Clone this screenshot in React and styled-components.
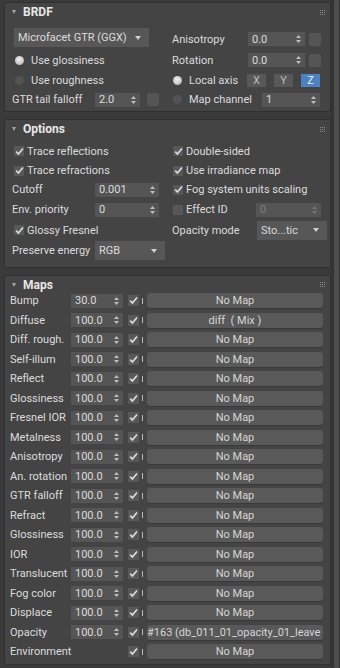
import React from "react";
import styled, { createGlobalStyle } from "styled-components";

const GlobalStyle = createGlobalStyle`
  html, body {
    margin: 0;
    padding: 0;
    background: #3a3a3a;
  }
  body {
    font-family: Roboto, "Liberation Sans", Arial, sans-serif;
    font-size: 11px;
    color: #dcdcdc;
  }
  #root {
    width: 340px;
    height: 668px;
    overflow: hidden;
  }
`;

const Window = styled.div`
  display: flex;
  width: 340px;
  height: 668px;
  overflow: hidden;
  background: #3a3a3a;
`;

const Main = styled.div`
  width: 331px;
  flex: none;
  display: flex;
  flex-direction: column;
  gap: 7px;
  padding: 2px 0 0 4px;
  box-sizing: border-box;
`;

const Scroll = styled.div`
  flex: 1;
  display: flex;
  justify-content: flex-end;
  padding-right: 1px;
  background: #343434;
`;

const Thumb = styled.div`
  width: 5px;
  background: #4e4e4e;
`;

const Panel = styled.section`
  background: #444444;
  border: 1px solid #303030;
  border-radius: 2px;
`;

const Header = styled.div`
  height: 18px;
  display: flex;
  align-items: center;
  padding: 0 5px 0 7px;
  font-size: 12px;
  font-weight: 700;
  color: #e8e8e8;
`;

const Caret = styled.span`
  width: 0;
  height: 0;
  border-left: 2.5px solid transparent;
  border-right: 2.5px solid transparent;
  border-top: 4px solid #a4a4a4;
  margin-right: 7px;
`;

const Grip = styled.svg`
  margin-left: auto;
`;

const Grid = styled.div`
  display: grid;
  grid-template-columns: 165px 160px;
  grid-template-rows: ${(p) => p.$rows};
  padding: ${(p) => p.$pad};
`;

const Cell = styled.div`
  display: flex;
  align-items: ${(p) => (p.$top ? "flex-start" : "center")};
  padding-left: ${(p) => (p.$right ? 2 : 7)}px;
  min-width: 0;
  white-space: nowrap;
`;

const Label = styled.span`
  width: ${(p) => (p.$w ? `${p.$w}px` : "auto")};
  flex: none;
  color: ${(p) => (p.$dim ? "#9a9a9a" : "#dcdcdc")};
`;

const SpinBox = styled.div`
  width: ${(p) => p.$w}px;
  height: 14px;
  flex: none;
  display: flex;
  align-items: center;
  justify-content: space-between;
  box-sizing: border-box;
  padding: 0 4px 0 4px;
  margin-left: ${(p) => p.$ml || 0}px;
  background: #555555;
  color: ${(p) => (p.$off ? "#7c7c7c" : "#dcdcdc")};
  visibility: ${(p) => (p.$hidden ? "hidden" : "visible")};
`;

const MapSlot = styled.div`
  width: 12px;
  height: 13px;
  flex: none;
  margin-left: ${(p) => p.$ml}px;
  border-radius: 2px;
  background: #555555;
`;

const Drop = styled.div`
  width: ${(p) => p.$w}px;
  height: 19px;
  flex: none;
  display: flex;
  align-items: center;
  justify-content: space-between;
  box-sizing: border-box;
  padding: 0 8px 0 4px;
  margin-left: ${(p) => p.$ml || 0}px;
  background: #575757;
  color: #dcdcdc;
`;

const DropCaret = styled.span`
  width: 0;
  height: 0;
  border-left: 3px solid transparent;
  border-right: 3px solid transparent;
  border-top: 4px solid #d0d0d0;
`;

const Radio = styled.span`
  width: 9px;
  height: 9px;
  flex: none;
  border-radius: 50%;
  margin: 0 7px 0 ${(p) => p.$ml}px;
  background: ${(p) =>
    p.$on ? "radial-gradient(circle at 45% 40%, #f0f0f0 0, #c8c8c8 60%, #8a8a8a 100%)" : "#535353"};
`;

const Box = styled.span`
  width: ${(p) => p.$s || 10}px;
  height: ${(p) => p.$s || 10}px;
  flex: none;
  display: flex;
  align-items: center;
  justify-content: center;
  margin: 0 ${(p) => (p.$mr === undefined ? 3 : p.$mr)}px 0 ${(p) => p.$ml || 0}px;
  background: #585858;
`;

const Axis = styled.span`
  width: 19px;
  height: 13px;
  flex: none;
  display: flex;
  align-items: center;
  justify-content: center;
  margin-left: ${(p) => p.$ml}px;
  background: ${(p) => (p.$on ? "#4b82c4" : "#585858")};
  color: ${(p) => (p.$on ? "#e6eefa" : "#bdbdbd")};
`;

const MapsBody = styled.div`
  display: grid;
  grid-auto-rows: 14px;
  row-gap: 5.5px;
  padding: 0 7px 5px 5px;
`;

const MapRow = styled.div`
  display: flex;
  align-items: center;
  min-width: 0;
`;

const Tick = styled.span`
  width: 1px;
  height: 6px;
  flex: none;
  margin: 0 4px 0 3px;
  background: #b8b8b8;
`;

const MapButton = styled.div`
  flex: 1;
  min-width: 0;
  height: 15px;
  display: flex;
  align-items: center;
  justify-content: ${(p) => (p.$left ? "flex-start" : "center")};
  border-radius: 3px;
  background: #595959;
  box-shadow: 0 1px 0 #393939;
  color: #d6d6d6;
  white-space: nowrap;
  overflow: hidden;
`;

const Arrows = ({ off }) => (
  <svg width="5" height="8" viewBox="0 0 5 8">
    <path d="M0 3 L2.5 0 L5 3 Z M0 5 L2.5 8 L5 5 Z" fill={off ? "#777" : "#bdbdbd"} />
  </svg>
);

const Check = () => (
  <svg width="9" height="9" viewBox="0 0 9 9">
    <path d="M1.2 4.6 L3.4 7 L8 1.4" fill="none" stroke="#dedede" strokeWidth="1.6" />
  </svg>
);

const Spinner = ({ value, w, ml, off, hidden }) => (
  <SpinBox $w={w} $ml={ml} $off={off} $hidden={hidden}>
    <span>{value}</span>
    <Arrows off={off} />
  </SpinBox>
);

const PanelHead = ({ title }) => (
  <Header>
    <Caret />
    {title}
    <Grip width="5" height="5" viewBox="0 0 5 5">
      {[0, 2, 4].map((y) =>
        [0, 2, 4].map((x) => <rect key={`${x}-${y}`} x={x} y={y} width="1" height="1" fill="#8a8a8a" />)
      )}
    </Grip>
  </Header>
);

const CheckRow = ({ label, on = true, ml = 2, dim }) => (
  <>
    <Box $ml={ml}>{on && <Check />}</Box>
    <Label $dim={dim}>{label}</Label>
  </>
);

const maps = [
  ["Bump", "30.0", "No Map"],
  ["Diffuse", "100.0", "diff\u00a0\u00a0( Mix )"],
  ["Diff. rough.", "100.0", "No Map"],
  ["Self-illum", "100.0", "No Map"],
  ["Reflect", "100.0", "No Map"],
  ["Glossiness", "100.0", "No Map"],
  ["Fresnel IOR", "100.0", "No Map"],
  ["Metalness", "100.0", "No Map"],
  ["Anisotropy", "100.0", "No Map"],
  ["An. rotation", "100.0", "No Map"],
  ["GTR falloff", "100.0", "No Map"],
  ["Refract", "100.0", "No Map"],
  ["Glossiness", "100.0", "No Map"],
  ["IOR", "100.0", "No Map"],
  ["Translucent", "100.0", "No Map"],
  ["Fog color", "100.0", "No Map"],
  ["Displace", "100.0", "No Map"],
  ["Opacity", "100.0", "#163 (db_011_01_opacity_01_leave", true],
  ["Environment", null, "No Map"],
];

export default function App() {
  return (
    <Window>
      <GlobalStyle />
      <Main>
        <Panel>
          <PanelHead title="BRDF" />
          <Grid $rows="22px 20px 20px 19px" $pad="7px 0 2px 0">
            <Cell $top>
              <Drop $w={135} $ml={2}>
                <span>Microfacet GTR (GGX)</span>
                <DropCaret />
              </Drop>
            </Cell>
            <Cell $right>
              <Label $w={76}>Anisotropy</Label>
              <Spinner value="0.0" w={57} />
              <MapSlot $ml={4} />
            </Cell>
            <Cell>
              <Radio $on $ml={3} />
              <Label>Use glossiness</Label>
            </Cell>
            <Cell $right>
              <Label $w={76}>Rotation</Label>
              <Spinner value="0.0" w={57} />
              <MapSlot $ml={4} />
            </Cell>
            <Cell>
              <Radio $ml={3} />
              <Label>Use roughness</Label>
            </Cell>
            <Cell $right>
              <Radio $on $ml={1} />
              <Label $w={58}>Local axis</Label>
              <Axis $ml={0}>X</Axis>
              <Axis $ml={8}>Y</Axis>
              <Axis $ml={8} $on>Z</Axis>
            </Cell>
            <Cell>
              <Label $w={83}>GTR tail falloff</Label>
              <Spinner value="2.0" w={45} />
              <MapSlot $ml={7} />
            </Cell>
            <Cell $right>
              <Radio $ml={1} />
              <Label $w={73}>Map channel</Label>
              <Spinner value="1" w={58} />
            </Cell>
          </Grid>
        </Panel>

        <Panel>
          <PanelHead title="Options" />
          <Grid $rows="20px 19px 19.5px 20px 21px 20px" $pad="3px 0 6px 0">
            <Cell>
              <CheckRow label="Trace reflections" />
            </Cell>
            <Cell $right>
              <CheckRow label="Double-sided" ml={1} />
            </Cell>
            <Cell>
              <CheckRow label="Trace refractions" />
            </Cell>
            <Cell $right>
              <CheckRow label="Use irradiance map" ml={1} />
            </Cell>
            <Cell>
              <Label $w={83}>Cutoff</Label>
              <Spinner value="0.001" w={64} />
            </Cell>
            <Cell $right>
              <CheckRow label="Fog system units scaling" ml={1} />
            </Cell>
            <Cell>
              <Label $w={83}>Env. priority</Label>
              <Spinner value="0" w={64} />
            </Cell>
            <Cell $right>
              <Box $ml={1} />
              <Label $w={70}>Effect ID</Label>
              <Spinner value="0" w={65} off />
            </Cell>
            <Cell>
              <CheckRow label="Glossy Fresnel" />
            </Cell>
            <Cell $right>
              <Label $w={85}>Opacity mode</Label>
              <Drop $w={70} $ml={0}>
                <span>Sto...tic</span>
                <DropCaret />
              </Drop>
            </Cell>
            <Cell>
              <Label $w={83}>Preserve energy</Label>
              <Drop $w={70}>
                <span>RGB</span>
                <DropCaret />
              </Drop>
            </Cell>
            <Cell $right />
          </Grid>
        </Panel>

        <Panel>
          <PanelHead title="Maps" />
          <MapsBody>
            {maps.map(([name, amount, map, left], i) => (
              <MapRow key={i}>
                <Label $w={61}>{name}</Label>
                <Spinner value={amount || "100.0"} w={52} hidden={!amount} />
                <Box $s={11} $ml={5} $mr={0}>
                  <Check />
                </Box>
                <Tick />
                <MapButton $left={left}>{map}</MapButton>
              </MapRow>
            ))}
          </MapsBody>
        </Panel>
      </Main>
      <Scroll>
        <Thumb />
      </Scroll>
    </Window>
  );
}
